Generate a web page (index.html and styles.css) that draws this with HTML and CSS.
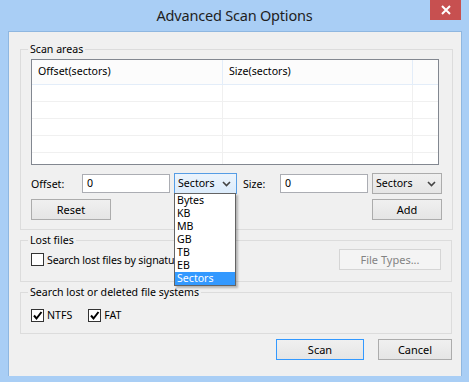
FILE: index.html
```html
<!DOCTYPE html>
<html>

<head>
    <title>Advanced Scan Options</title>
    <meta charset="utf-8">
    <meta name="viewport" content="width=device-width, initial-scale=1.0">
    <link rel="stylesheet" href="styles.css">
</head>

<body>
    <div class="window">
        <div class="titlebar">
            <span class="title">Advanced Scan Options</span>
            <span class="close">
                <svg width="10" height="10" viewBox="0 0 10 10">
                    <path d="M1 1 L9 9 M9 1 L1 9" stroke="#fff" stroke-width="2" />
                </svg>
            </span>
        </div>

        <div class="client">
            <fieldset class="group scan-areas">
                <legend>Scan areas</legend>
                <div class="list">
                    <div class="list-head">
                        <div class="col c1">Offset(sectors)</div>
                        <div class="col c2">Size(sectors)</div>
                        <div class="col c3"></div>
                    </div>
                    <div class="list-row"><div class="col c1"></div><div class="col c2"></div><div class="col c3"></div></div>
                    <div class="list-row"><div class="col c1"></div><div class="col c2"></div><div class="col c3"></div></div>
                    <div class="list-row"><div class="col c1"></div><div class="col c2"></div><div class="col c3"></div></div>
                    <div class="list-row"><div class="col c1"></div><div class="col c2"></div><div class="col c3"></div></div>
                    <div class="list-row last"><div class="col c1"></div><div class="col c2"></div><div class="col c3"></div></div>
                </div>

                <div class="fields">
                    <span class="lbl lbl-offset">Offset:</span>
                    <div class="input">0</div>
                    <div class="dropwrap">
                        <div class="select focused">Sectors<span class="chev"><svg width="9" height="6" viewBox="0 0 9 6"><path d="M1 1 L4.5 4.5 L8 1" stroke="#444" stroke-width="1.6" fill="none" /></svg></span></div>
                        <ul class="droplist">
                            <li>Bytes</li>
                            <li>KB</li>
                            <li>MB</li>
                            <li>GB</li>
                            <li>TB</li>
                            <li>EB</li>
                            <li class="picked">Sectors</li>
                        </ul>
                    </div>
                    <span class="lbl lbl-size">Size:</span>
                    <div class="input">0</div>
                    <div class="select wide">Sectors<span class="chev"><svg width="9" height="6" viewBox="0 0 9 6"><path d="M1 1 L4.5 4.5 L8 1" stroke="#444" stroke-width="1.6" fill="none" /></svg></span></div>
                </div>

                <div class="btnrow">
                    <button class="btn reset">Reset</button>
                    <button class="btn add">Add</button>
                </div>
            </fieldset>

            <fieldset class="group lost">
                <legend>Lost files</legend>
                <div class="lostrow">
                    <label class="check sig"><span class="box"></span>Search lost files by signatu</label>
                    <button class="btn disabled types">File Types...</button>
                </div>
            </fieldset>

            <fieldset class="group fs">
                <legend>Search lost or deleted file systems</legend>
                <div class="fsrow">
                    <label class="check"><span class="box"><svg width="11" height="11" viewBox="0 0 11 11"><path d="M2 5.5 L4.5 8.5 L9.5 2" stroke="#000" stroke-width="2" fill="none" /></svg></span>NTFS</label>
                    <label class="check"><span class="box"><svg width="11" height="11" viewBox="0 0 11 11"><path d="M2 5.5 L4.5 8.5 L9.5 2" stroke="#000" stroke-width="2" fill="none" /></svg></span>FAT</label>
                </div>
            </fieldset>

            <div class="footer">
                <button class="btn default scan">Scan</button>
                <button class="btn cancel">Cancel</button>
            </div>
        </div>
    </div>
</body>

</html>
```

FILE: styles.css
```css
body {
    margin: 0;
    font-family: "Noto Sans", "Liberation Sans", sans-serif;
    font-size: 10.6px;
    color: #000;
}

.window {
    width: 469px;
    height: 382px;
    background-color: #a9cef5;
    box-sizing: border-box;
    display: flex;
    flex-direction: column;
}

.titlebar {
    position: relative;
    height: 31px;
    text-align: center;
}

.title {
    display: inline-block;
    margin-top: 5px;
    font-size: 14.5px;
    letter-spacing: -0.2px;
    color: #1e1e1e;
}

.close {
    position: absolute;
    top: 0;
    right: 8px;
    width: 31px;
    height: 20px;
    background-color: #c75050;
    display: flex;
    align-items: center;
    justify-content: center;
}

.client {
    margin: 0 7px 0 8px;
    height: 345px;
    background-color: #f0f0f0;
    border: 1px solid #8fb7e0;
    border-bottom: none;
    box-sizing: border-box;
    padding: 10px 9px 0 11px;
}

.group {
    margin: 0;
    border: 1px solid #dcdcdc;
    padding: 0 10px 0 10px;
}

.group legend {
    padding: 0 2px;
    margin-left: -3px;
}

.scan-areas {
    height: 188px;
    box-sizing: border-box;
}

.list {
    margin-top: 3px;
    width: 408px;
    height: 106px;
    box-sizing: border-box;
    border: 1px solid #828790;
    background-color: #fff;
    overflow: hidden;
}

.list-head,
.list-row {
    display: flex;
}

.list-head {
    height: 24px;
    line-height: 23px;
    border-bottom: 1px solid #e3edf9;
    background-color: #fcfcfc;
}

.list-row {
    height: 17px;
    box-sizing: border-box;
    border-bottom: 1px solid #f0f0f0;
}

.list-row.last {
    border-bottom: none;
}

.col {
    box-sizing: border-box;
    border-right: 1px solid #f0f0f0;
    padding-left: 6px;
}

.list-head .col {
    border-right-color: #e3edf9;
}

.c1 {
    width: 191px;
}

.c2 {
    width: 190px;
}

.c3 {
    flex: 1;
    border-right: none;
}

.fields {
    display: flex;
    align-items: center;
    margin-top: 8px;
    height: 21px;
}

.lbl-offset {
    width: 51px;
}

.lbl-size {
    width: 37px;
    margin-left: 6px;
}

.input {
    width: 88px;
    height: 19px;
    box-sizing: border-box;
    border: 1px solid #abadb3;
    background-color: #fff;
    padding-left: 4px;
    line-height: 16px;
}

.dropwrap {
    position: relative;
    margin-left: 4px;
}

.select {
    width: 63px;
    height: 21px;
    box-sizing: border-box;
    border: 1px solid #acacac;
    background: linear-gradient(#f0f0f0, #e5e5e5);
    padding-left: 3px;
    line-height: 18px;
    display: flex;
    justify-content: space-between;
}

.select.focused {
    border-color: #569de5;
    background: linear-gradient(#ecf4fc, #dcecfc);
}

.select.wide {
    width: 70px;
    margin-left: 4px;
}

.chev {
    width: 14px;
    display: flex;
    align-items: center;
}

.droplist {
    position: absolute;
    top: 20px;
    left: 0;
    width: 60px;
    margin: 0;
    padding: 0;
    list-style: none;
    background-color: #fff;
    border: 1px solid #646464;
    box-shadow: 2px 2px 2px rgba(0, 0, 0, 0.25);
    z-index: 5;
}

.droplist li {
    height: 13px;
    line-height: 13px;
    padding-left: 2px;
    overflow: hidden;
}

.droplist li.picked {
    background-color: #3399ff;
    color: #fff;
}

.btnrow {
    display: flex;
    justify-content: space-between;
    margin-top: 5px;
}

.btn {
    height: 21px;
    box-sizing: border-box;
    border: 1px solid #acacac;
    background: linear-gradient(#f0f0f0, #e5e5e5);
    font-family: inherit;
    font-size: 11px;
    color: #000;
    padding: 0;
}

.reset {
    width: 80px;
}

.add {
    width: 70px;
}

.lost {
    margin-top: 3px;
    height: 49px;
    box-sizing: border-box;
}

.lostrow {
    display: flex;
    justify-content: space-between;
    align-items: center;
    margin-top: 2px;
}

.check {
    display: flex;
    align-items: center;
    gap: 3px;
}

.sig {
    white-space: nowrap;
    letter-spacing: -0.15px;
}

.box {
    flex: none;
    width: 13px;
    height: 13px;
    box-sizing: border-box;
    border: 1px solid #333;
    background-color: #fff;
    display: flex;
    align-items: center;
    justify-content: center;
}

.disabled {
    color: #838383;
    border-color: #d5d5d5;
    background: #f4f4f4;
}

.types {
    width: 102px;
}

.fs {
    margin-top: 3px;
    height: 49px;
    box-sizing: border-box;
}

.fsrow {
    display: flex;
    gap: 16px;
    margin-top: 9px;
}

.footer {
    display: flex;
    justify-content: flex-end;
    gap: 14px;
    margin-top: 5px;
}

.scan {
    width: 88px;
}

.default {
    border-color: #3399ff;
}

.cancel {
    width: 74px;
}
```
